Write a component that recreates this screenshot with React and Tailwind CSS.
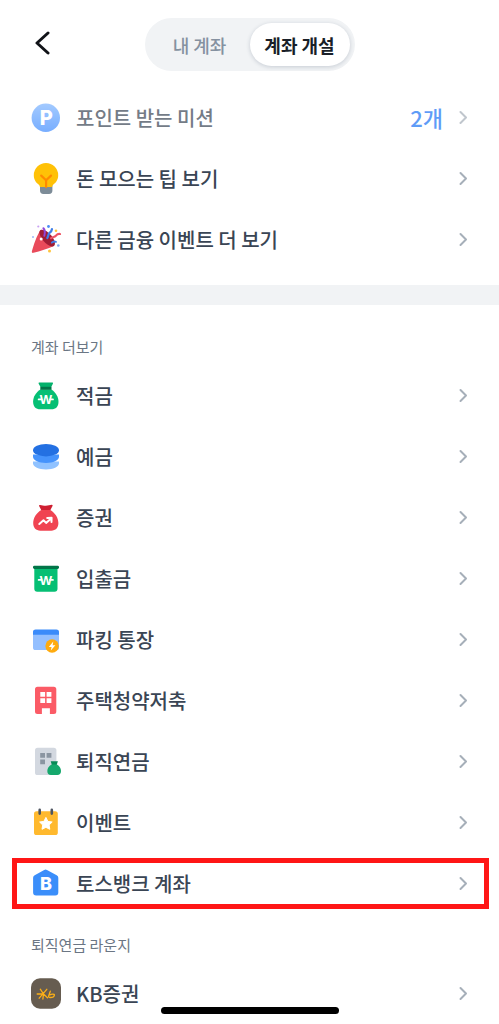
import { useState } from 'react';

const LETTER = { fontFamily: 'Inter', fontWeight: 800, textAnchor: 'middle', fill: '#fff' };

function Icon({ children }) {
    return (
        <svg viewBox="0 0 31 31" className="size-[31px] shrink-0" fill="none" aria-hidden="true">
            {children}
        </svg>
    );
}

function Chevron() {
    return (
        <svg viewBox="0 0 9 15" className="h-[15px] w-[9px] shrink-0 text-[#a6afb9]" fill="none" aria-hidden="true">
            <path d="M1.5 2l5.5 5.5L1.5 13" stroke="currentColor" strokeWidth="2" strokeLinecap="round" strokeLinejoin="round" />
        </svg>
    );
}

function PointIcon() {
    return (
        <Icon>
            <defs>
                <linearGradient id="point" x1="0" y1="0" x2="0" y2="1">
                    <stop stopColor="#7db4ff" />
                    <stop offset="1" stopColor="#3f8cff" />
                </linearGradient>
            </defs>
            <circle cx="14.8" cy="15.7" r="14.2" fill="url(#point)" />
            <text x="15.2" y="22.8" fontSize="20" {...LETTER}>P</text>
        </Icon>
    );
}

function BulbIcon() {
    return (
        <Icon>
            <path d="M9 22h12.4v5.6a3.4 3.4 0 0 1-3.4 3.4h-5.6A3.4 3.4 0 0 1 9 27.6z" fill="#7d8c98" />
            <path d="M15 0a12.2 12.2 0 0 0-12.2 12.2c0 4.8 2.6 7.6 4.8 9.3.9.7 1.2 1.500 1.3 2.5h12.200c.1-1 .4-1.800 1.300-2.500 2.200-1.700 4.800-4.500 4.800-9.300A12.200 12.200 0 0 0 15 0z" fill="#ffc107" />
            <path d="M10.2 12.6l4.9 4.600 4.900-4.600M15.100 17.200V24" stroke="#ff8a00" strokeWidth="2.2" strokeLinecap="round" />
        </Icon>
    );
}

function PopperIcon() {
    return (
        <Icon>
            <path d="M9.500 6C5.900 11.500 2.700 20.500.900 27.300c-.3 1.200.5 1.900 1.600 1.500 6.500-1.900 14.500-4.300 20.300-6.900z" fill="#e94b5b" />
            <path d="M9.300 6.200c2.300-1.700 7.500 1 11 5.200 3.400 4.100 4.800 9 2.600 10.600-2.300 1.600-7.300-1-10.600-5.200C9 12.500 7.300 7.900 9.300 6.200z" fill="#9f1d35" />
            <path d="M12.400 4.200c2 2 1.700 4.700.9 7.500" stroke="#9146d8" strokeWidth="2" strokeLinecap="round" />
            <path d="M21 5c-.4 2.600-1.300 2.800-2.500 3.800-1.400 1.200-.9 3-2.200 5.200" stroke="#3f7fe8" strokeWidth="2.200" strokeLinecap="round" />
            <path d="M29 10c-2.700-.4-3.400.9-4.400 2-1.100 1.300-3 .7-4.600 2.300" stroke="#ee5363" strokeWidth="2.200" strokeLinecap="round" />
            <path d="M20.800 18.700c1.400-1.500 2.700-1.500 4.200-.9" stroke="#3f7fe8" strokeWidth="1.800" strokeLinecap="round" />
            <circle cx="10.200" cy="15" r="1.500" fill="#fff" />
            <circle cx="7.300" cy="2.500" r="1.100" fill="#c9a2f2" />
            <circle cx="17.500" cy="2.500" r="1.400" fill="#4a8df8" />
            <circle cx="25" cy="6.800" r="1.300" fill="#ffc53d" />
            <circle cx="2" cy="13" r="1" fill="#9db9f5" />
            <circle cx="27.300" cy="21.500" r="1.300" fill="#7fa9f7" />
            <circle cx="18.500" cy="27" r="1.500" fill="#ffc53d" />
        </Icon>
    );
}

// won sign: a W with a short bar sticking out on each side
function WonMark({ y }) {
    return (
        <>
            <path d={`M7.600 ${y - 4.600}h3M19 ${y - 4.600}h3`} stroke="#fff" strokeWidth="1.700" strokeLinecap="round" />
            <text
                x="14.800"
                y={y}
                fontSize="13"
                fontFamily="Liberation Sans"
                fontWeight="700"
                textAnchor="middle"
                fill="#fff"
            >
                W
            </text>
        </>
    );
}

function SavingIcon() {
    return (
        <Icon>
            <path d="M8.500 2.500h12.600c.8 0 1.100.6.800 1.200L20.200 7H9.500L7.700 3.700c-.3-.6 0-1.200.8-1.200z" fill="#03b26c" />
            <path d="M9.400 9.600h11c4 2.300 7.100 7.500 7.100 12.100 0 5-2.800 7.600-7.100 7.600H9.200c-4.300 0-7.100-2.600-7.100-7.600 0-4.600 3.200-9.800 7.300-12.100z" fill="#06bf74" />
            <rect x="9.300" y="6.800" width="11.200" height="3" fill="#027548" />
            <WonMark y={24} />
        </Icon>
    );
}

function DepositIcon() {
    return (
        <Icon>
            <path d="M2 20.500h26v1.800c0 3.400-5.800 6.200-13 6.200S2 25.700 2 22.300z" fill="#90c2ff" />
            <path d="M2 13.500h26v2.300c0 3.400-5.800 6.200-13 6.200S2 19.200 2 15.800z" fill="#4593fc" />
            <ellipse cx="15" cy="9.200" rx="13" ry="6.200" fill="#2370e2" />
        </Icon>
    );
}

function StockIcon() {
    return (
        <Icon>
            <path d="M9 3c2 .3 3.500.8 5.800.8S19 3 20.800 2.800c.8 0 1 .6.700 1.200L19.200 8.400h-8.800L8.100 4.100C7.800 3.400 8.200 2.900 9 3z" fill="#cf1f31" />
            <path d="M10.400 8h8.800c4.800 2.500 8.200 8 8.200 13.100 0 5-2.800 7.600-7.100 7.600h-11c-4.300 0-7.100-2.600-7.100-7.600C2.200 16 5.600 10.500 10.400 8z" fill="#f04452" />
            <path d="M8.300 22l4.200-3.800 2.600 2.700 5-4.500M16.200 15.900l4.400-.1-.1 4.300" stroke="#fff" strokeWidth="2" strokeLinecap="round" strokeLinejoin="round" />
        </Icon>
    );
}

function CheckingIcon() {
    return (
        <Icon>
            <path d="M3.300 5h23.200v20.700a3 3 0 0 1-3 3H6.300a3 3 0 0 1-3-3z" fill="#06bf74" />
            <rect x="2" y="2.700" width="26" height="3.300" rx="1.400" fill="#027548" />
            <WonMark y={21.500} />
        </Icon>
    );
}

function ParkingIcon() {
    return (
        <Icon>
            <rect x="2" y="6" width="26" height="20" rx="2.600" fill="#93bfff" />
            <path d="M4.600 5.600h20.800A2.600 2.600 0 0 1 28 8.200v2.600H2V8.200a2.600 2.600 0 0 1 2.600-2.600z" fill="#3b8bfa" />
            <circle cx="21.100" cy="22" r="6.700" fill="#ffab0f" />
            <path d="M22.300 17.600l-4.500 5.300h2.800l-.8 3.700 4.600-5.400h-2.800z" fill="#fff" />
        </Icon>
    );
}

function HousingIcon() {
    return (
        <Icon>
            <path d="M6.500 1.700h16.300a2.500 2.500 0 0 1 2.500 2.500v22.300a2.500 2.500 0 0 1-2.500 2.500h-3.900v-5.700h-8V29H6.500A2.500 2.500 0 0 1 4 26.500V4.200a2.500 2.500 0 0 1 2.500-2.500z" fill="#fb5b66" />
            <path d="M9.300 6.900h4.800v4.800H9.300zM15.600 6.900h4.800v4.800h-4.800zM9.300 13.300h4.800v4.800H9.300zM15.600 13.300h4.800v4.800h-4.800z" fill="#fff" />
        </Icon>
    );
}

function PensionIcon() {
    return (
        <Icon>
            <rect x="4" y="1.700" width="21.400" height="27.300" rx="2.600" fill="#d3d8e0" />
            <path d="M9.200 7h4.800v4.800H9.200zM15.600 7h4.800v4.800h-4.800zM9.200 13.400h4.800v4.800H9.200z" fill="#8b95a1" />
            <path d="M19.700 15.300h7.200l-1.300 4h-4.600z" fill="#078a56" />
            <path d="M20.500 18.500h5.500c2.400 1.300 4 3.700 4 6.500 0 2.600-1.400 4-3.600 4h-6.500c-2.200 0-3.600-1.400-3.600-4 0-2.800 1.700-5.200 4.200-6.500z" fill="#15a86c" />
        </Icon>
    );
}

function EventIcon() {
    return (
        <Icon>
            <rect x="3" y="4.200" width="23.800" height="23.800" rx="2.600" fill="#ffb92e" />
            <path d="M8.700 2.900v3.700M20.800 2.900v3.700" stroke="#4e5561" strokeWidth="2.600" strokeLinecap="round" />
            <path d="M14.900 10.400l2 4 4.300.6-3.100 3 .7 4.300-3.900-2-3.900 2 .7-4.300-3.100-3 4.300-.6z" fill="#fff" stroke="#fff" strokeWidth="1" strokeLinejoin="round" />
        </Icon>
    );
}

function BankIcon() {
    return (
        <Icon>
            <path d="M13.200 1.900a2.800 2.800 0 0 1 2.800 0L25.700 7.200a3 3 0 0 1 1.600 2.600v14.700a3 3 0 0 1-3 3H5.100a3 3 0 0 1-3-3V9.800a3 3 0 0 1 1.600-2.600z" fill="#3b8efa" />
            <text x="14.900" y="22" fontSize="18" {...LETTER}>B</text>
        </Icon>
    );
}

function KbIcon() {
    return (
        <Icon>
            <rect x="0" y=".3" width="30" height="30.400" rx="9" fill="#665c50" />
            <path d="M6.200 16h6.300M9.300 11.200l3.200 4.800M15.800 11.300L8.200 20.200M12.500 16l-.6 5M12.500 16l4 3.800" stroke="#fbaf17" strokeWidth="1.300" strokeLinecap="round" />
            <path d="M19.300 13.200l-1.700 4.900c-.2 1 .6 1.400 1.600 1.400 2.200 0 4-1 4.200-2.400.1-1.300-2.600-1.400-4.700-.2" stroke="#fbaf17" strokeWidth="1.300" strokeLinecap="round" />
        </Icon>
    );
}

const BENEFITS = [
    { name: '포인트 받는 미션', icon: PointIcon, count: '2개', faded: true },
    { name: '돈 모으는 팁 보기', icon: BulbIcon },
    { name: '다른 금융 이벤트 더 보기', icon: PopperIcon },
];

const ACCOUNTS = [
    { name: '적금', icon: SavingIcon },
    { name: '예금', icon: DepositIcon },
    { name: '증권', icon: StockIcon },
    { name: '입출금', icon: CheckingIcon },
    { name: '파킹 통장', icon: ParkingIcon },
    { name: '주택청약저축', icon: HousingIcon },
    { name: '퇴직연금', icon: PensionIcon },
    { name: '이벤트', icon: EventIcon },
    { name: '토스뱅크 계좌', icon: BankIcon, highlighted: true },
];

const LOUNGE = [{ name: 'KB증권', icon: KbIcon }];

const TABS = ['내 계좌', '계좌 개설'];

function MenuList({ items }) {
    return (
        <ul>
            {items.map(({ name, icon: ItemIcon, count, faded, highlighted }) => (
                <li key={name} className="relative">
                    <a href="#" className={`flex h-[61px] items-center px-[31px] ${faded ? 'opacity-70' : ''}`}>
                        <ItemIcon />
                        <span className="ml-3.5 flex-1 text-xl font-medium text-[#3a4554]">{name}</span>
                        {count && <span className="mr-4 text-[22px] font-medium text-[#1b73f5]">{count}</span>}
                        <Chevron />
                    </a>
                    {highlighted && (
                        <span className="pointer-events-none absolute inset-y-[5px] right-2.5 left-3 border-5 border-[#ff1616]" />
                    )}
                </li>
            ))}
        </ul>
    );
}

export default function App() {
    const [tab, setTab] = useState(TABS[1]);

    return (
        <div className="bg-white font-['Noto_Sans_CJK_KR',sans-serif]">
            <header className="grid h-[87px] grid-cols-[1fr_auto_1fr] items-start pt-[18px]">
                <button type="button" aria-label="뒤로" className="ml-[34px] flex h-[50px] w-4 items-center">
                    <svg viewBox="0 0 16 24" className="h-6 w-4" fill="none">
                        <path d="M14 2L3 12l11 10" stroke="#111318" strokeWidth="3" strokeLinecap="round" strokeLinejoin="round" />
                    </svg>
                </button>
                <nav className="flex rounded-full bg-[#f1f3f5] p-[5px]">
                    {TABS.map((name) => (
                        <button
                            key={name}
                            type="button"
                            onClick={() => setTab(name)}
                            className={`h-[43px] w-[100px] rounded-full text-lg ${
                                tab === name
                                    ? 'bg-white font-bold text-[#191f28] shadow-[0_1px_4px_rgba(30,50,80,0.2)]'
                                    : 'font-medium text-[#8591a0]'
                            }`}
                        >
                            {name}
                        </button>
                    ))}
                </nav>
            </header>

            <main>
                <section className="pb-[15px]">
                    <MenuList items={BENEFITS} />
                </section>

                <div className="h-5 bg-[#f1f3f5]" />

                <section>
                    <h2 className="px-[31px] pt-8 pb-2 text-[15px] leading-5 text-[#6b7684]">계좌 더보기</h2>
                    <MenuList items={ACCOUNTS} />
                </section>

                <section>
                    <h2 className="px-[31px] pt-[21px] pb-2 text-[15px] leading-5 text-[#6b7684]">퇴직연금 라운지</h2>
                    <MenuList items={LOUNGE} />
                </section>
            </main>

            <div className="fixed bottom-[10px] left-1/2 h-[7px] w-[178px] -translate-x-1/2 rounded-full bg-black" />
        </div>
    );
}
